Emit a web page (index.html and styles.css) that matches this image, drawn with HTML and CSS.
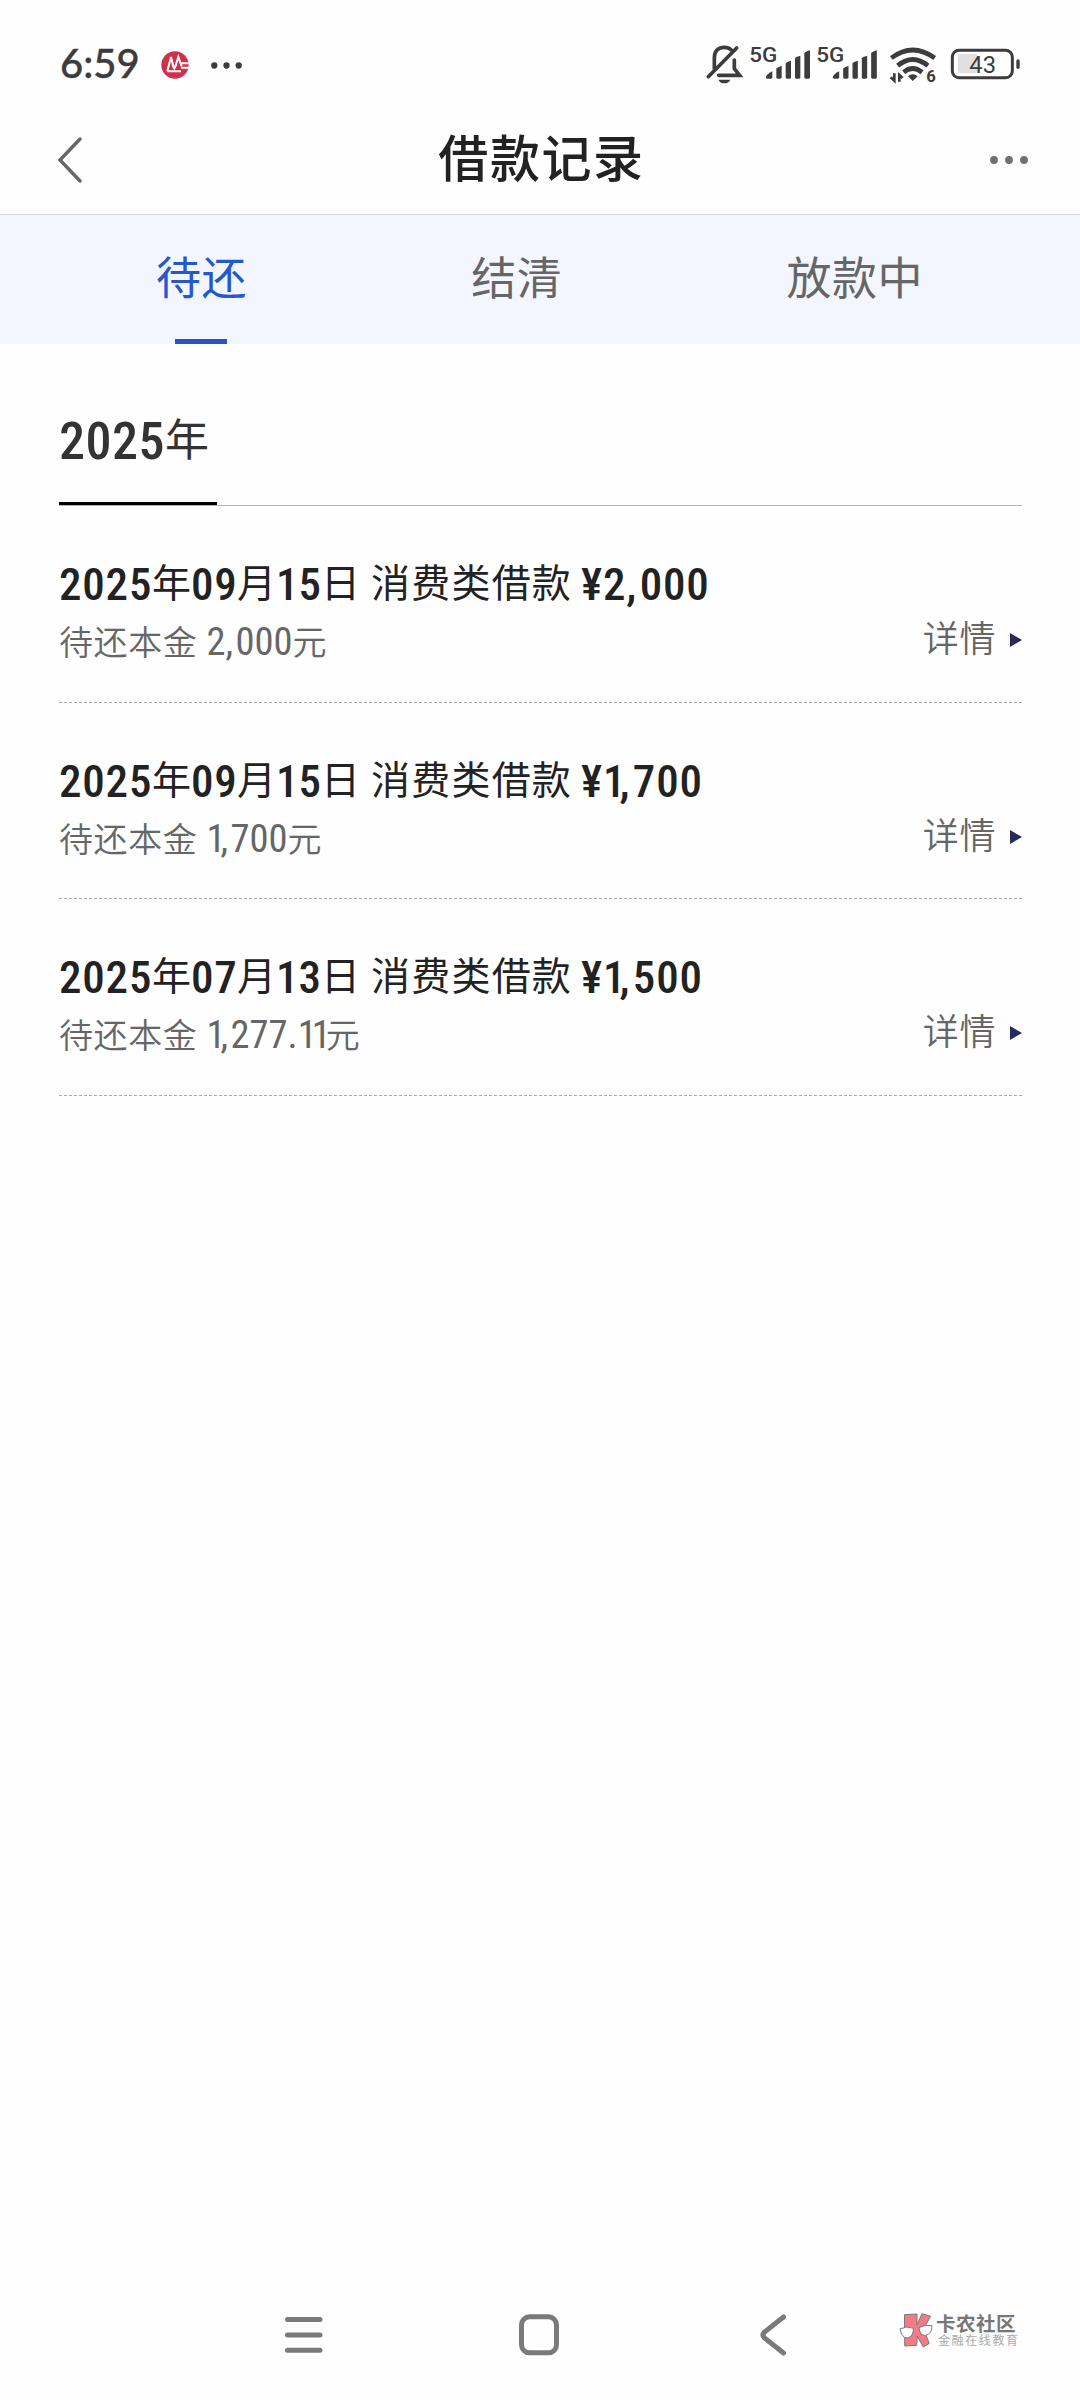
FILE: index.html
```html
<!DOCTYPE html>
<html lang="zh-CN">
<head>
<meta charset="utf-8">
<title>借款记录</title>
<link rel="stylesheet" href="styles.css">
</head>
<body>
<div class="screen">
  <div class="status">
    <div class="status-left">
      <span class="clock">6:59</span>
      <svg class="bank" viewBox="0 0 84 84">
        <circle cx="42" cy="42" r="41" fill="#d0304c"/>
        <path d="M19 61 H60 M60 37 H84 M60 50 H84" fill="none" stroke="#fff" stroke-width="6"/>
        <path d="M19 61 L30 18 L38 50 M34 40 L40 52 L46 40 M42 50 L52 18 L62 46" fill="none" stroke="#fff" stroke-width="6"/>
      </svg>
      <svg class="more-small" viewBox="0 0 94 20">
        <circle cx="10" cy="10" r="9.5"/><circle cx="47" cy="10" r="9.5"/><circle cx="84" cy="10" r="9.5"/>
      </svg>
    </div>
    <svg class="status-icons" viewBox="0 0 1050 210">
      <g fill="none" stroke="#3c3c3c" stroke-width="11" stroke-linecap="round" stroke-linejoin="round">
        <path d="M55 140 L140 54"/>
        <path d="M73 116 V84 C73 62 86 52 103 52 C112 52 119 55 124 60"/>
        <path d="M133 90 V116 L149 136 H86" stroke-linejoin="miter"/>
      </g>
      <path d="M85 149 H121 Q116 160 103 160 Q90 160 85 149 Z" fill="#3c3c3c"/>
      <g class="net">
        <text x="178" y="95" textLength="84" lengthAdjust="spacingAndGlyphs">5G</text>
        <text x="379" y="95" textLength="84" lengthAdjust="spacingAndGlyphs">5G</text>
      </g>
      <g id="bars" fill="#3c3c3c">
        <path d="M228 142 Q228 134 247 124 V142 Q247 146 243 146 H232 Q228 146 228 142Z"/>
        <path d="M259 115 L275 107 V142 Q275 146 271 146 H263 Q259 146 259 142Z"/>
        <path d="M287 101 Q287 97 303 92 V142 Q303 146 299 146 H291 Q287 146 287 142Z"/>
        <path d="M315 85 Q316 81 331 77 V142 Q331 146 327 146 H319 Q315 146 315 142Z"/>
        <path d="M343 70 Q345 66 360 61 V142 Q360 146 356 146 H347 Q343 146 343 142Z"/>
      </g>
      <use href="#bars" x="200.5"/>
      <g fill="none" stroke="#3c3c3c" stroke-width="14">
        <path d="M604 84 Q668 36 734 84"/>
        <path d="M623 107 Q668 70 714 107"/>
        <path d="M641 127 Q668 104 696 127"/>
      </g>
      <path d="M654 139 Q668 126 683 139 L668 153Z" fill="#3c3c3c"/>
      <path d="M602 142 L613 152 V130 M628 155 V135 L638 144" fill="none" stroke="#3c3c3c" stroke-width="8"/>
      <text class="six" x="709" y="156">6</text>
      <rect x="804" y="72" width="58" height="58" rx="7" fill="#e0e0e0"/>
      <rect x="787" y="61" width="180" height="82" rx="20" fill="none" stroke="#3c3c3c" stroke-width="9"/>
      <rect x="979" y="88" width="10" height="29" rx="5" fill="#3c3c3c"/>
      <text class="level" x="838" y="128" textLength="80" lengthAdjust="spacingAndGlyphs">43</text>
    </svg>
  </div>

  <header class="header">
    <svg class="back" viewBox="0 0 26 46"><path d="M23 2 L3 23 L23 44" fill="none" stroke="#666" stroke-width="3.4" stroke-linecap="round"/></svg>
    <h1 class="title">借款记录</h1>
    <svg class="more" viewBox="0 0 38 10"><circle cx="4" cy="5" r="3.9"/><circle cx="19" cy="5" r="3.9"/><circle cx="34" cy="5" r="3.9"/></svg>
  </header>

  <nav class="tabs">
    <span class="tab active">待还</span>
    <span class="tab">结清</span>
    <span class="tab">放款中</span>
  </nav>

  <main class="content">
    <div class="year-row"><h2 class="year"><span class="num">2025</span><span class="han">年</span></h2></div>

    <section class="loan">
      <div class="info">
        <div class="name">
          <span class="num w-year">2025</span><span class="han">年</span><span class="num w-month">09</span><span class="han">月</span><span class="num w-day">15</span><span class="han">日</span><span class="han kind">消费类借款</span><span class="num amount">¥2<i class="comma">,</i>000</span>
        </div>
        <div class="rest"><span class="label">待还本金</span><span class="num">2<i class="comma">,</i>000</span><span>元</span></div>
      </div>
      <a class="detail">详情<svg class="arrow" viewBox="0 0 12 14"><path d="M0 0 L12 7 L0 14Z"/></svg></a>
    </section>

    <section class="loan">
      <div class="info">
        <div class="name">
          <span class="num w-year">2025</span><span class="han">年</span><span class="num w-month">09</span><span class="han">月</span><span class="num w-day">15</span><span class="han">日</span><span class="han kind">消费类借款</span><span class="num amount">¥<i class="one">1</i><i class="comma">,</i>700</span>
        </div>
        <div class="rest"><span class="label">待还本金</span><span class="num"><i class="one">1</i><i class="comma">,</i>700</span><span>元</span></div>
      </div>
      <a class="detail">详情<svg class="arrow" viewBox="0 0 12 14"><path d="M0 0 L12 7 L0 14Z"/></svg></a>
    </section>

    <section class="loan">
      <div class="info">
        <div class="name">
          <span class="num w-year">2025</span><span class="han">年</span><span class="num w-month">07</span><span class="han">月</span><span class="num w-day">13</span><span class="han">日</span><span class="han kind">消费类借款</span><span class="num amount">¥<i class="one">1</i><i class="comma">,</i>500</span>
        </div>
        <div class="rest"><span class="label">待还本金</span><span class="num"><i class="one">1</i><i class="comma">,</i>277<i class="dot">.</i><i class="one">1</i><i class="one">1</i></span><span>元</span></div>
      </div>
      <a class="detail">详情<svg class="arrow" viewBox="0 0 12 14"><path d="M0 0 L12 7 L0 14Z"/></svg></a>
    </section>
  </main>

  <footer class="sysbar">
    <svg class="key menu" viewBox="0 0 40 42"><path d="M3.5 5.5 H36 M3.5 21 H36 M3.5 36.2 H36"/></svg>
    <svg class="key home" viewBox="0 0 42 42"><rect x="3.5" y="2.8" width="35" height="36" rx="8"/></svg>
    <svg class="key prev" viewBox="0 0 28 42"><path d="M24.5 3 L5.5 18 Q2.5 21 5.5 24 L24.5 39"/></svg>
    <div class="brand">
      <svg class="brand-mark" viewBox="0 0 102 106">
        <path d="M16 5 L54 3 L54 36 L69 2 L95 10 L74 48 L91 92 L73 103 L55 70 L53 98 L17 100 Z" fill="#f37b86" stroke="#777" stroke-width="3"/>
        <g fill="#fff" stroke="#777" stroke-width="3">
          <path d="M3 48 Q22 38 43 46 Q44 72 24 76 Q6 74 3 48Z"/>
          <path d="M60 44 Q80 34 99 38 Q101 62 80 68 Q62 68 60 44Z"/>
        </g>
      </svg>
      <div class="brand-text"><b>卡农社区</b><small>金融在线教育</small></div>
    </div>
  </footer>
</div>
</body>
</html>
```
FILE: styles.css
```css
* { box-sizing: border-box; margin: 0; padding: 0; }
body { background: #fefefe; font-family: "Noto Sans CJK SC", sans-serif; color: #222; }
svg { display: block; flex: none; }
i { font-style: normal; }
.screen { width: 1080px; height: 2400px; display: flex; flex-direction: column; overflow: hidden; }
.num { font-family: "Roboto Condensed", sans-serif; }

.status { height: 105px; display: flex; justify-content: space-between; padding: 30px 40px 0 60px; }
.status-left { display: flex; height: 70px; align-items: center; }
.clock { width: 101px; height: 70px; font: 500 40px/66px "Lato", sans-serif; color: #3c3c3c; -webkit-text-stroke: 0.4px #3c3c3c; white-space: nowrap; }
.bank { width: 28px; height: 28px; }
.more-small { width: 31px; height: 7px; margin-left: 22px; fill: #3c3c3c; }
.status-icons { width: 350px; height: 70px; font-family: "Roboto", sans-serif; fill: #3c3c3c; }
.net text { font-size: 61px; font-weight: 500; }
.six { font-size: 50px; font-weight: 700; }
.level { font-size: 69px; font-weight: 400; }

.header { height: 110px; display: flex; align-items: center; justify-content: space-between; padding: 0 52px 0 57px; border-bottom: 1px solid #d8dade; }
.back { width: 26px; height: 46px; }
.title { font-size: 50px; font-weight: 500; line-height: 70px; letter-spacing: 1.6px; margin: -10px 0 0 10px; }
.more { width: 38px; height: 10px; fill: #707070; }

.tabs { height: 129px; display: flex; justify-content: space-between; padding: 0 157px 0 156px; background: #f3f6fe; }
.tab { position: relative; font-size: 45px; line-height: 122px; letter-spacing: 0.5px; color: #666; }
.tab.active { color: #2458cf; }
.tab.active::after { content: ""; position: absolute; left: 19px; bottom: 0; width: 52px; height: 5px; background: #2b54c2; }

.content { padding: 0 58px 0 59px; flex: 1; }
.year-row { height: 162px; border-bottom: 1px solid #b4b4b4; display: flex; }
.year { width: 158px; height: 161px; border-bottom: 3px solid #000; font-size: 44px; font-weight: 400; line-height: 64px; padding-top: 64px; color: #333; white-space: nowrap; }
.year .num { font-size: 52px; font-weight: 500; letter-spacing: 0.5px; }
.han { display: inline-block; transform: translateY(-3px); }

.loan { height: 196.5px; border-bottom: 1px dashed #aaa; display: flex; justify-content: space-between; }
.info { padding-top: 47px; }
.name { display: flex; align-items: baseline; height: 60px; line-height: 60px; font-size: 39px; white-space: nowrap; color: #222; }
.name .num { font-size: 45px; font-weight: 500; letter-spacing: 0.8px; }
.w-year { width: 93px; }
.w-month { width: 46px; }
.name .w-day { width: 45px; letter-spacing: 0; }
.kind { margin-left: 11px; letter-spacing: 1.2px; }
.amount { margin-left: 9px; }
.one { letter-spacing: -5px; }
.amount .one { letter-spacing: -6px; }
.comma { margin-right: 2.5px; }
.rest { display: flex; align-items: baseline; height: 54px; line-height: 56px; font-size: 34px; white-space: nowrap; color: #666; font-weight: 350; }
.label { letter-spacing: 0.6px; margin-right: 9px; }
.rest .num { font-size: 38.5px; font-weight: 400; }
.detail { display: flex; align-items: center; height: 54px; margin-top: 103px; font-size: 36px; letter-spacing: 0.6px; color: #666; font-weight: 350; }
.arrow { width: 12px; height: 14px; margin: 8px 0 0 14px; fill: #262b5a; }

.sysbar { height: 130px; display: flex; align-items: center; padding-left: 284px; }
.key { height: 42px; fill: none; stroke: #7a7a7a; stroke-width: 5; stroke-linecap: round; }
.menu { width: 40px; }
.home { width: 42px; margin-left: 194px; }
.prev { width: 28px; margin-left: 199px; }
.brand { display: flex; margin: 0 0 10px 112px; gap: 3px; align-items: center; height: 42px; }
.brand-mark { width: 34px; height: 35px; }
.brand-text { display: flex; flex-direction: column; color: #777; white-space: nowrap; }
.brand-text b { font-size: 19.5px; line-height: 20px; font-weight: 700; letter-spacing: 0.5px; }
.brand-text small { font-size: 12px; line-height: 14px; letter-spacing: 1.6px; color: #aaa; margin-left: 2px; }
```
